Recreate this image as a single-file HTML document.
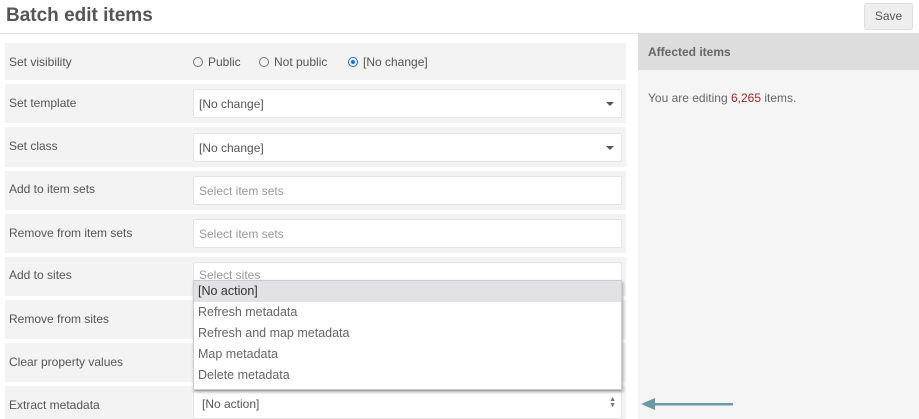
<!DOCTYPE html>
<html><head><meta charset="utf-8"><style>
*{box-sizing:border-box;margin:0;padding:0}
body{width:919px;height:419px;overflow:hidden;background:#fff;font-family:"Liberation Sans",sans-serif;color:#676767;font-size:12px;position:relative}
h1{position:absolute;left:6px;top:5px;font-size:19px;font-weight:bold;color:#555}
.hr{position:absolute;left:0;top:33px;width:638px;height:1px;background:#e2e2e2}
.save{position:absolute;left:864px;top:3px;width:49px;height:27px;background:#eee;border:1px solid #ddd;border-radius:3px;text-align:center;line-height:25px;font-size:12px;color:#555}
.side{position:absolute;left:638px;top:33px;width:281px;height:386px;background:#f5f5f5}
.sideh{height:37px;background:#ddd;padding:12px 10px;font-weight:bold;font-size:12px;color:#666}
.sidet{padding:21px 10px;font-size:12px}
.sidet b{color:#a32727;font-weight:normal}
.row{position:absolute;left:5px;width:621px;background:#f3f3f3}
.row .l{position:absolute;left:4px;font-size:12px;color:#555}
.inp{position:absolute;left:188px;width:429px;height:29px;background:#fff;border:1px solid #e4e4e4;border-radius:2px;padding:7px 5px;font-size:12px;color:#555}
.ph{color:#999}
.car{position:absolute;right:7px;top:12px;border-left:4px solid transparent;border-right:4px solid transparent;border-top:4px solid #555}
.rad{position:absolute;top:12px;font-size:12px;color:#555}
.rad i{display:inline-block;width:10px;height:10px;border:1px solid #777;border-radius:50%;vertical-align:-1px;margin-right:5px;position:relative}
.rad i.on{border-color:#1a73e8}
.rad i.on:after{content:"";position:absolute;left:2px;top:2px;width:4px;height:4px;border-radius:50%;background:#1a73e8}
.dd{position:absolute;left:193px;top:280px;width:429px;height:110px;background:#fff;border:1px solid #ccc;box-shadow:1px 2px 3px rgba(0,0,0,.35);font-family:"Liberation Sans",sans-serif}
.dd div{height:21px;line-height:21px;padding-left:4px;font-size:12.5px;color:#666}
.dd div.h{background:#e1e1e6;color:#333}
</style></head><body>
<h1>Batch edit items</h1>
<div class="hr"></div>
<div class="save">Save</div>
<div class="side"><div class="sideh">Affected items</div><div class="sidet">You are editing <b>6,265</b> items.</div></div>

<div class="row" style="top:43px;height:37px"><span class="l" style="top:12px">Set visibility</span>
<span class="rad" style="left:188px"><i></i>Public</span>
<span class="rad" style="left:254px"><i></i>Not public</span>
<span class="rad" style="left:343px"><i class="on"></i>[No change]</span></div>

<div class="row" style="top:84px;height:39px"><span class="l" style="top:12px">Set template</span><div class="inp" style="top:5px">[No change]<span class="car"></span></div></div>
<div class="row" style="top:127px;height:40px"><span class="l" style="top:12px">Set class</span><div class="inp" style="top:6px">[No change]<span class="car"></span></div></div>
<div class="row" style="top:171px;height:39px"><span class="l" style="top:11px">Add to item sets</span><div class="inp ph" style="top:5px">Select item sets</div></div>
<div class="row" style="top:214px;height:39px"><span class="l" style="top:12px">Remove from item sets</span><div class="inp ph" style="top:5px">Select item sets</div></div>
<div class="row" style="top:257px;height:39px"><span class="l" style="top:11px">Add to sites</span><div class="inp ph" style="top:5px;padding-top:5px">Select sites</div></div>
<div class="row" style="top:300px;height:39px"><span class="l" style="top:12px">Remove from sites</span></div>
<div class="row" style="top:343px;height:39px"><span class="l" style="top:12px">Clear property values</span></div>
<div class="row" style="top:386px;height:33px"><span class="l" style="top:12px">Extract metadata</span><div class="inp" style="top:4px;padding-left:8px;padding-top:6px">[No action]<span style="position:absolute;right:5px;top:6px;font-size:7px;line-height:6px;color:#777">▲<br>▼</span></div></div>

<div class="dd"><div class="h">[No action]</div><div>Refresh metadata</div><div>Refresh and map metadata</div><div>Map metadata</div><div>Delete metadata</div></div>

<svg style="position:absolute;left:638px;top:396px" width="100" height="16"><path d="M3 8 L17 2 L17 14 Z" fill="#6a9aa8"/><rect x="16" y="7" width="79" height="2.5" fill="#6a9aa8"/></svg>
</body></html>
